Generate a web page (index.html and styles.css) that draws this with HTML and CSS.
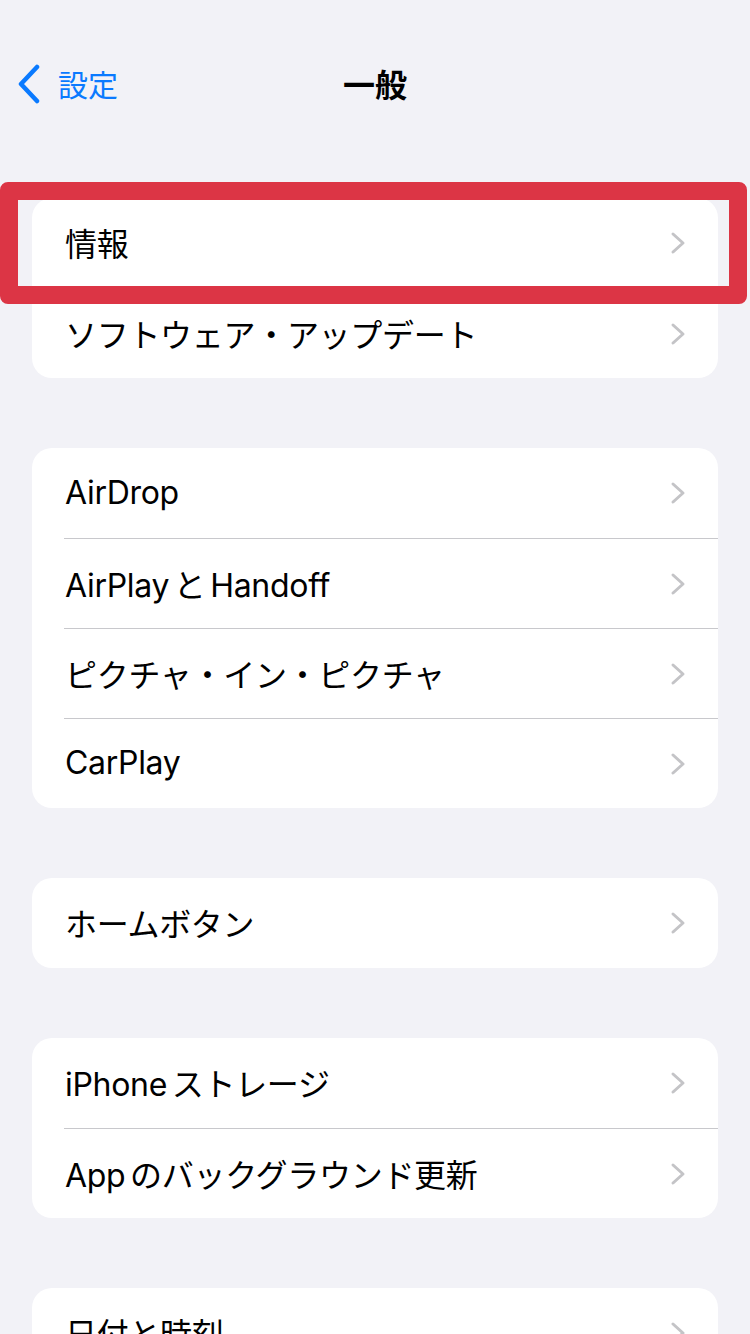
FILE: index.html
```html
<!DOCTYPE html>
<html lang="ja">
<head>
	<meta charset="utf-8">
	<title>一般</title>
	<link rel="stylesheet" href="styles.css">
</head>
<body>
	<header class="nav">
		<a class="back" href="#">
			<svg class="back-icon" width="26" height="40" viewBox="0 0 26 40"><path d="M21 3 L5 20 L21 37" fill="none" stroke="#0a7aff" stroke-width="4.5" stroke-linecap="round" stroke-linejoin="round"/></svg>
			<span>設定</span>
		</a>
		<h1 class="title">一般</h1>
	</header>

	<main class="groups">
		<section class="card">
			<div class="row"><span class="label">情報</span><svg class="chev" width="16" height="24" viewBox="0 0 16 24"><path d="M3 3 L13 12 L3 21" /></svg></div>
			<div class="row"><span class="label">ソフトウェア・アップデート</span><svg class="chev" width="16" height="24" viewBox="0 0 16 24"><path d="M3 3 L13 12 L3 21" /></svg></div>
		</section>

		<section class="card">
			<div class="row"><span class="label">AirDrop</span><svg class="chev" width="16" height="24" viewBox="0 0 16 24"><path d="M3 3 L13 12 L3 21" /></svg></div>
			<div class="row"><span class="label">AirPlay と Handoff</span><svg class="chev" width="16" height="24" viewBox="0 0 16 24"><path d="M3 3 L13 12 L3 21" /></svg></div>
			<div class="row"><span class="label">ピクチャ・イン・ピクチャ</span><svg class="chev" width="16" height="24" viewBox="0 0 16 24"><path d="M3 3 L13 12 L3 21" /></svg></div>
			<div class="row"><span class="label">CarPlay</span><svg class="chev" width="16" height="24" viewBox="0 0 16 24"><path d="M3 3 L13 12 L3 21" /></svg></div>
		</section>

		<section class="card">
			<div class="row"><span class="label">ホームボタン</span><svg class="chev" width="16" height="24" viewBox="0 0 16 24"><path d="M3 3 L13 12 L3 21" /></svg></div>
		</section>

		<section class="card">
			<div class="row"><span class="label">iPhone ストレージ</span><svg class="chev" width="16" height="24" viewBox="0 0 16 24"><path d="M3 3 L13 12 L3 21" /></svg></div>
			<div class="row"><span class="label">App のバックグラウンド更新</span><svg class="chev" width="16" height="24" viewBox="0 0 16 24"><path d="M3 3 L13 12 L3 21" /></svg></div>
		</section>

		<section class="card card-last">
			<div class="row"><span class="label">日付と時刻</span><svg class="chev" width="16" height="24" viewBox="0 0 16 24"><path d="M3 3 L13 12 L3 21" /></svg></div>
		</section>
	</main>

	<div class="highlight"></div>
</body>
</html>
```

FILE: styles.css
```css
html, body {
	margin: 0;
	padding: 0;
}
body {
	position: relative;
	width: 750px;
	height: 1334px;
	overflow: hidden;
	background-color: #f2f2f7;
	font-family: "Inter", "Noto Sans CJK JP", sans-serif;
	color: #000;
}
.nav {
	position: relative;
	display: flex;
	align-items: center;
	justify-content: center;
	height: 88px;
	padding-top: 40px;
}
.back {
	position: absolute;
	left: 16px;
	top: 40px;
	height: 88px;
	display: flex;
	align-items: center;
	gap: 16px;
	color: #0a7aff;
	text-decoration: none;
	font-size: 30px;
	font-family: "Noto Sans CJK JP", sans-serif;
}
.back span {
	margin-top: -2px;
}
.title {
	margin: 0;
	font-size: 32px;
	font-weight: bold;
	font-family: "Noto Sans CJK JP", sans-serif;
	margin-top: -2px;
}
.groups {
	display: flex;
	flex-direction: column;
	gap: 70px;
	padding-top: 70px;
}
.card {
	margin: 0 32px;
	background-color: #fff;
	border-radius: 20px;
	overflow: hidden;
}
.row {
	box-sizing: border-box;
	display: flex;
	align-items: center;
	justify-content: space-between;
	height: 90px;
	margin-left: 32px;
	padding-left: 1px;
	padding-right: 32px;
}
.row + .row {
	border-top: 1px solid #c8c8cc;
}
.label {
	font-size: 32px;
	margin-top: -2px;
	letter-spacing: -0.3px;
	word-spacing: -4px;
}
.chev path {
	fill: none;
	stroke: #c4c4c7;
	stroke-width: 3;
	stroke-linecap: round;
	stroke-linejoin: round;
}
.highlight {
	position: absolute;
	left: 0;
	top: 182px;
	width: 747px;
	height: 122px;
	box-sizing: border-box;
	border: 18px solid #dc3545;
	border-radius: 8px;
}
```
